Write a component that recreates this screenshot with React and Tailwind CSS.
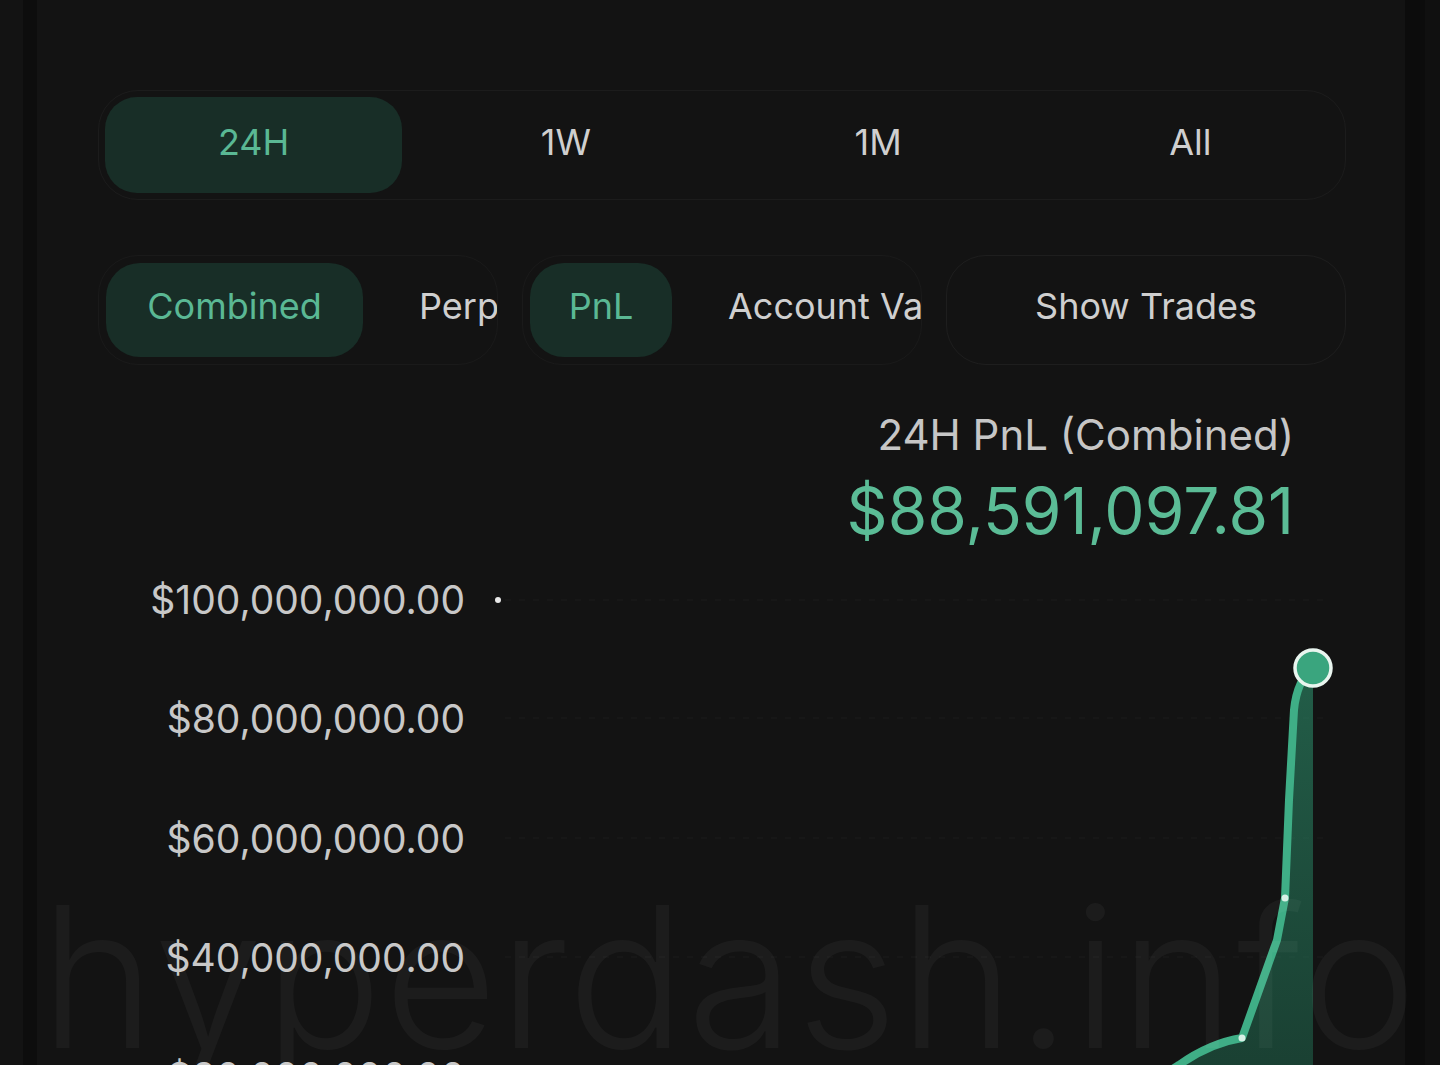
import React from "react";

const font = { fontFamily: 'Inter, "Liberation Sans", Arial, sans-serif' };

function TimeTabs() {
  const tabs = ["24H", "1W", "1M", "All"];
  return (
    <div className="w-[1248px] h-[110px] rounded-[40px] border border-[#1c1c1c] p-[6px] grid grid-cols-4 gap-[15px]">
      {tabs.map((t, i) => (
        <div
          key={t}
          className={
            i === 0
              ? "rounded-[32px] bg-[#182e27] flex items-center justify-center pb-[6px] text-[36px] text-[#5ab894]"
              : "rounded-[32px] flex items-center justify-center pb-[6px] text-[36px] text-[#cfcfcf]"
          }
        >
          {t}
        </div>
      ))}
    </div>
  );
}

function FilterRow() {
  return (
    <div className="w-[1248px] h-[110px] mt-[55px] flex gap-[24px]">
      <div className="w-[400px] h-full rounded-[40px] border border-[#1a1a1a] p-[7px] flex items-center overflow-hidden">
        <div className="w-[257px] h-[94px] shrink-0 rounded-[34px] bg-[#182e27] flex items-center justify-center pb-[8px] text-[36px] text-[#5ab894]">
          Combined
        </div>
        <div className="shrink-0 pl-[56px] pb-[8px] text-[36px] text-[#cfcfcf] whitespace-nowrap">Perps</div>
      </div>
      <div className="w-[400px] h-full rounded-[40px] border border-[#1a1a1a] p-[7px] flex items-center overflow-hidden">
        <div className="w-[142px] h-[94px] shrink-0 rounded-[34px] bg-[#182e27] flex items-center justify-center pb-[8px] text-[36px] text-[#5ab894]">
          PnL
        </div>
        <div className="shrink-0 pl-[56px] pb-[8px] text-[36px] text-[#cfcfcf] whitespace-nowrap">Account Value</div>
      </div>
      <div className="w-[400px] h-full rounded-[40px] border border-[#1e1e1e] flex items-center justify-center pb-[8px] text-[36px] text-[#cfcfcf]">
        Show Trades
      </div>
    </div>
  );
}

function Chart() {
  const labels = [
    "$100,000,000.00",
    "$80,000,000.00",
    "$60,000,000.00",
    "$40,000,000.00",
    "$20,000,000.00",
  ];
  const line =
    "M 560 620 L 650 565 L 714 525 Q 745 503 777 498 L 812 400 L 820 358 L 824 260 L 829 170 Q 832 140 848 128";
  const area = line + " L 848 620 Z";
  return (
    <div className="-mt-[3px] flex w-full">
      <div className="w-[428px] shrink-0 flex flex-col items-end">
        {labels.map((l) => (
          <div key={l} className="h-[119.3px] shrink-0 flex items-center text-[39px] text-[#c8c8c8] leading-none whitespace-nowrap">
            {l}
          </div>
        ))}
      </div>
      <svg width="940" height="600" viewBox="0 0 940 600" className="shrink-0">
        <defs>
          <linearGradient id="fillg" x1="0" y1="0" x2="0" y2="1">
            <stop offset="0%" stopColor="#2f9b74" stopOpacity="0.55" />
            <stop offset="100%" stopColor="#1f6b50" stopOpacity="0.45" />
          </linearGradient>
        </defs>
        {[60, 178, 298, 417].map((y) => (
          <line key={y} x1="40" x2="860" y1={y} y2={y} stroke="#171717" strokeWidth="2" strokeDasharray="6 8" />
        ))}
        <circle cx="33" cy="60" r="3" fill="#e8e8e8" />
        <path d={area} fill="url(#fillg)" />
        <path d={line} fill="none" stroke="#3fae86" strokeWidth="8" strokeLinejoin="round" strokeLinecap="round" />
        <circle cx="820" cy="358" r="3.5" fill="#d8f0e6" />
        <circle cx="777" cy="498" r="3.5" fill="#d8f0e6" />
        <circle cx="848" cy="128" r="18" fill="#3aa57e" stroke="#e9f5ef" strokeWidth="3.5" />
      </svg>
    </div>
  );
}

export default function App() {
  return (
    <div className="relative w-[1440px] h-[1065px] overflow-hidden bg-[#121212] flex" style={font}>
      <div className="w-[23px] shrink-0 bg-[#131313]" />
      <div className="w-[14px] shrink-0 bg-[#0d0d0d]" />
      <div className="w-[1368px] shrink-0 bg-[#131313] flex flex-col pt-[90px]">
        <div className="pl-[61px] flex flex-col">
          <TimeTabs />
          <FilterRow />
          <div className="w-[1248px] pr-[52px] flex flex-col items-end">
            <div className="mt-[49px] text-[42px] leading-[42px] text-[#c6c6c6] whitespace-nowrap">24H PnL (Combined)</div>
            <div className="mt-[23px] text-[64px] leading-[64px] text-[#5bbc96] whitespace-nowrap">$88,591,097.81</div>
          </div>
        </div>
        <Chart />
      </div>
      <div className="w-[20px] shrink-0 bg-[#0c0c0c]" />
      <div className="flex-1 bg-[#101010]" />
      <div
        className="absolute left-[40px] top-[879px] text-[196px] leading-[196px] font-light tracking-[1.5px] whitespace-nowrap text-white/[0.04] pointer-events-none"
      >
        hyperdash.info
      </div>
    </div>
  );
}
